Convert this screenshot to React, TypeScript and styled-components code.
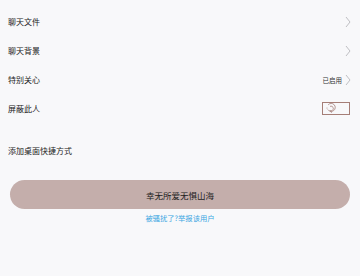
import React from 'react'
import styled, { createGlobalStyle } from 'styled-components'

const GlobalStyle = createGlobalStyle`
  html, body {
    margin: 0;
    padding: 0;
    background: #f8f8fa;
    font-family: "Noto Sans CJK SC", "Noto Sans", sans-serif;
  }
`

const Page = styled.div`
  width: 360px;
  height: 276px;
  background: #f8f8fa;
  padding-top: 7px;
  box-sizing: border-box;
`

const Group = styled.div<{ $gap?: number }>`
  display: flex;
  flex-direction: column;
  margin-top: ${(p) => p.$gap ?? 0}px;
`

const Row = styled.div`
  height: 29px;
  display: flex;
  align-items: center;
  justify-content: space-between;
  padding: 0 9px 0 8px;
`

const Label = styled.span`
  font-size: 8px;
  color: #222;
`

const Right = styled.div`
  display: flex;
  align-items: center;
  gap: 3px;
`

const Status = styled.span`
  font-size: 6.5px;
  color: #333;
`

const Toggle = styled.div`
  width: 23px;
  height: 11px;
  border: 1px solid #a57e77;
  margin-right: 1px;
  display: flex;
  align-items: center;
  padding-left: 3px;
`

const ActionWrap = styled.div`
  padding: 15px 10px 0 10px;
`

const ActionButton = styled.button`
  width: 100%;
  height: 29px;
  border: none;
  border-radius: 15px;
  background: #c4aeab;
  color: #222;
  font-family: inherit;
  font-size: 8.5px;
  display: flex;
  align-items: center;
  justify-content: center;
`

const Report = styled.div`
  text-align: center;
  font-size: 7.3px;
  color: #3aa6e2;
  margin-top: 4px;
`

const Chevron = () => (
  <svg width="6" height="12" viewBox="0 0 6 12">
    <path d="M1 1 L5 6 L1 11" fill="none" stroke="#b8b8bc" strokeWidth="0.9" />
  </svg>
)

const Spiral = () => (
  <svg width="11" height="11" viewBox="0 0 11 11">
    <path
      d="M2.2 1.8 A4 4 0 1 1 1.8 6.5 M4 3.4 A2.3 2.3 0 1 1 4.2 7.6 L5.6 9.8"
      fill="none"
      stroke="#a57e77"
      strokeWidth="0.8"
    />
    <circle cx="1" cy="5" r="0.5" fill="#a57e77" />
  </svg>
)

export default function App() {
  return (
    <>
      <GlobalStyle />
      <Page>
        <Group>
          <Row>
            <Label>聊天文件</Label>
            <Chevron />
          </Row>
          <Row>
            <Label>聊天背景</Label>
            <Chevron />
          </Row>
          <Row>
            <Label>特别关心</Label>
            <Right>
              <Status>已启用</Status>
              <Chevron />
            </Right>
          </Row>
          <Row>
            <Label>屏蔽此人</Label>
            <Toggle>
              <Spiral />
            </Toggle>
          </Row>
        </Group>
        <Group $gap={13}>
          <Row>
            <Label>添加桌面快捷方式</Label>
          </Row>
        </Group>
        <ActionWrap>
          <ActionButton>幸无所爱无惧山海</ActionButton>
        </ActionWrap>
        <Report>被骚扰了?举报该用户</Report>
      </Page>
    </>
  )
}
